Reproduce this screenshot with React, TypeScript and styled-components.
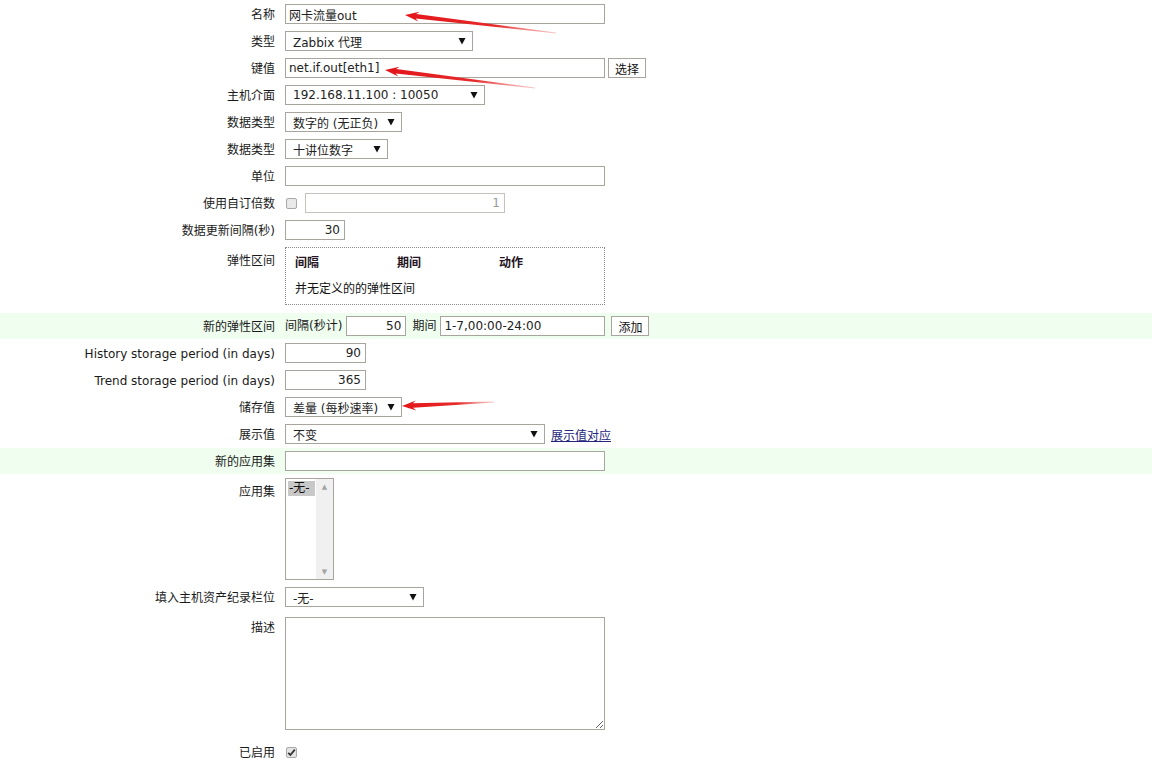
import React from "react";
import styled, { createGlobalStyle } from "styled-components";

const GlobalStyle = createGlobalStyle`
  body {
    margin: 0;
    background: #ffffff;
    font-family: "DejaVu Sans", "Noto Sans CJK SC", sans-serif;
    font-size: 12px;
    color: #111111;
  }
`;

type Arrow = { tx: number; ty: number; ex: number; ey: number };

const ARROWS: Arrow[] = [
  { tx: 405, ty: 15, ex: 556, ey: 33 },
  { tx: 385, ty: 70, ex: 535, ey: 88 },
  { tx: 402, ty: 406, ex: 494, ey: 402 },
];

const arrowPoints = ({ tx, ty, ex, ey }: Arrow) => {
  const dx = ex - tx;
  const dy = ey - ty;
  const len = Math.hypot(dx, dy);
  const ux = dx / len;
  const uy = dy / len;
  const px = -uy;
  const py = ux;
  const bx = tx + ux * 14;
  const by = ty + uy * 14;
  const nx = tx + ux * 11;
  const ny = ty + uy * 11;
  const pts = [
    [tx, ty],
    [bx + px * 5, by + py * 5],
    [nx + px * 2.2, ny + py * 2.2],
    [ex + px * 0.4, ey + py * 0.4],
    [ex - px * 0.4, ey - py * 0.4],
    [nx - px * 2.2, ny - py * 2.2],
    [bx - px * 5, by - py * 5],
  ];
  return pts.map((p) => `${p[0].toFixed(1)},${p[1].toFixed(1)}`).join(" ");
};

const ItemForm = () => {
  return (
    <SC.Page>
      <GlobalStyle />

      <SC.Row>
        <SC.Label>名称</SC.Label>
        <SC.Field>
          <SC.Input $width={320} defaultValue="网卡流量out" />
        </SC.Field>
      </SC.Row>

      <SC.Row>
        <SC.Label>类型</SC.Label>
        <SC.Field>
          <Select width={188} value="Zabbix 代理" />
        </SC.Field>
      </SC.Row>

      <SC.Row>
        <SC.Label>键值</SC.Label>
        <SC.Field $gap={3}>
          <SC.Input $width={320} defaultValue="net.if.out[eth1]" />
          <SC.Button>选择</SC.Button>
        </SC.Field>
      </SC.Row>

      <SC.Row>
        <SC.Label>主机介面</SC.Label>
        <SC.Field>
          <Select width={200} value="192.168.11.100 : 10050" />
        </SC.Field>
      </SC.Row>

      <SC.Row>
        <SC.Label>数据类型</SC.Label>
        <SC.Field>
          <Select width={117} value="数字的 (无正负)" />
        </SC.Field>
      </SC.Row>

      <SC.Row>
        <SC.Label>数据类型</SC.Label>
        <SC.Field>
          <Select width={103} value="十讲位数字" />
        </SC.Field>
      </SC.Row>

      <SC.Row>
        <SC.Label>单位</SC.Label>
        <SC.Field>
          <SC.Input $width={320} defaultValue="" />
        </SC.Field>
      </SC.Row>

      <SC.Row>
        <SC.Label>使用自订倍数</SC.Label>
        <SC.Field $gap={8}>
          <SC.Check />
          <SC.Input $width={200} $right $disabled readOnly defaultValue="1" />
        </SC.Field>
      </SC.Row>

      <SC.Row>
        <SC.Label>数据更新间隔(秒)</SC.Label>
        <SC.Field>
          <SC.Input $width={60} $right defaultValue="30" />
        </SC.Field>
      </SC.Row>

      <SC.Row>
        <SC.Label $offset={3}>弹性区间</SC.Label>
        <SC.Field $top>
          <SC.Interval.Box>
            <SC.Interval.Head>间隔</SC.Interval.Head>
            <SC.Interval.Head>期间</SC.Interval.Head>
            <SC.Interval.Head>动作</SC.Interval.Head>
            <SC.Interval.Empty>并无定义的的弹性区间</SC.Interval.Empty>
          </SC.Interval.Box>
        </SC.Field>
      </SC.Row>

      <SC.Row $green>
        <SC.Label>新的弹性区间</SC.Label>
        <SC.Field>
          <SC.Text>间隔(秒计)</SC.Text>
          <SC.Input $width={60} $right defaultValue="50" />
          <SC.Text $left={6}>期间</SC.Text>
          <SC.Input $width={165} defaultValue="1-7,00:00-24:00" />
          <SC.Button $left={6}>添加</SC.Button>
        </SC.Field>
      </SC.Row>

      <SC.Row>
        <SC.Label>History storage period (in days)</SC.Label>
        <SC.Field>
          <SC.Input $width={81} $right defaultValue="90" />
        </SC.Field>
      </SC.Row>

      <SC.Row>
        <SC.Label>Trend storage period (in days)</SC.Label>
        <SC.Field>
          <SC.Input $width={81} $right defaultValue="365" />
        </SC.Field>
      </SC.Row>

      <SC.Row>
        <SC.Label>储存值</SC.Label>
        <SC.Field>
          <Select width={117} value="差量 (每秒速率)" />
        </SC.Field>
      </SC.Row>

      <SC.Row>
        <SC.Label>展示值</SC.Label>
        <SC.Field $gap={6}>
          <Select width={260} value="不变" />
          <SC.Link href="#">展示值对应</SC.Link>
        </SC.Field>
      </SC.Row>

      <SC.Row $green>
        <SC.Label>新的应用集</SC.Label>
        <SC.Field>
          <SC.Input $width={320} defaultValue="" />
        </SC.Field>
      </SC.Row>

      <SC.Row>
        <SC.Label $offset={3}>应用集</SC.Label>
        <SC.Field $top>
          <SC.List.Box>
            <SC.List.Options>
              <SC.List.Option>-无-</SC.List.Option>
            </SC.List.Options>
            <SC.List.Track>
              <SC.List.Arrow>▲</SC.List.Arrow>
              <SC.List.Arrow>▼</SC.List.Arrow>
            </SC.List.Track>
          </SC.List.Box>
        </SC.Field>
      </SC.Row>

      <SC.Row>
        <SC.Label>填入主机资产纪录栏位</SC.Label>
        <SC.Field>
          <Select width={139} value="-无-" />
        </SC.Field>
      </SC.Row>

      <SC.Row>
        <SC.Label $offset={3}>描述</SC.Label>
        <SC.Field $top>
          <SC.TextArea defaultValue="" />
        </SC.Field>
      </SC.Row>

      <SC.Row>
        <SC.Label>已启用</SC.Label>
        <SC.Field>
          <SC.Check $checked>
            <svg width="9" height="9" viewBox="0 0 9 9">
              <path
                d="M1.2 4.8 L3.4 7 L7.8 1.6"
                fill="none"
                stroke="#333"
                strokeWidth="1.8"
              />
            </svg>
          </SC.Check>
        </SC.Field>
      </SC.Row>

      <SC.Overlay width="1152" height="763" viewBox="0 0 1152 763">
        <defs>
          {ARROWS.map((a, i) => (
            <linearGradient
              key={i}
              id={`arrow-${i}`}
              gradientUnits="userSpaceOnUse"
              x1={a.tx}
              y1={a.ty}
              x2={a.ex}
              y2={a.ey}
            >
              <stop offset="0" stopColor="#e3151a" />
              <stop offset="0.6" stopColor="#e62a2a" />
              <stop offset="1" stopColor="#f07a7a" stopOpacity="0.4" />
            </linearGradient>
          ))}
        </defs>
        {ARROWS.map((a, i) => (
          <polygon key={i} points={arrowPoints(a)} fill={`url(#arrow-${i})`} />
        ))}
      </SC.Overlay>
    </SC.Page>
  );
};

const Select = ({ width, value }: { width: number; value: string }) => (
  <SC.Select $width={width}>
    <span>{value}</span>
    <svg width="8" height="8" viewBox="0 0 8 8">
      <path d="M0.5 1 L7.5 1 L4 7.5 Z" fill="#111" />
    </svg>
  </SC.Select>
);

const SC = {
  Page: styled.div`
    position: relative;
    display: flex;
    flex-direction: column;
    gap: 1px;
    width: 1152px;
    padding-top: 1px;
  `,
  Row: styled.div<{ $green?: boolean }>`
    display: grid;
    grid-template-columns: 285px 1fr;
    align-items: start;
    padding: 3px 0;
    background: ${({ $green }) => ($green ? "#effeef" : "transparent")};
  `,
  Label: styled.div<{ $offset?: number }>`
    box-sizing: border-box;
    padding-right: 10px;
    padding-top: ${({ $offset }) => ($offset || 0) + 1}px;
    margin-bottom: -1px;
    text-align: right;
    line-height: 20px;
    font-size: 12px;
    color: #1a1a1a;
    white-space: nowrap;
  `,
  Field: styled.div<{ $gap?: number; $top?: boolean }>`
    display: flex;
    flex-direction: row;
    align-items: ${({ $top }) => ($top ? "flex-start" : "center")};
    gap: ${({ $gap }) => $gap || 0}px;
    min-height: 20px;
  `,
  Text: styled.span<{ $left?: number }>`
    margin-left: ${({ $left }) => $left || 0}px;
    margin-right: 4px;
    line-height: 20px;
    color: #1a1a1a;
  `,
  Input: styled.input<{ $width: number; $right?: boolean; $disabled?: boolean }>`
    box-sizing: border-box;
    width: ${({ $width }) => $width}px;
    height: 20px;
    margin: 0;
    padding: 0 4px 0 3px;
    border: 1px solid ${({ $disabled }) => ($disabled ? "#c4c2bc" : "#a7a59d")};
    border-radius: 0;
    outline: none;
    background: #ffffff;
    font-family: "DejaVu Sans", "Noto Sans CJK SC", sans-serif;
    font-size: 12px;
    color: ${({ $disabled }) => ($disabled ? "#9a9a9a" : "#222222")};
    text-align: ${({ $right }) => ($right ? "right" : "left")};
  `,
  Select: styled.div<{ $width: number }>`
    box-sizing: border-box;
    display: flex;
    align-items: center;
    justify-content: space-between;
    width: ${({ $width }) => $width}px;
    height: 20px;
    padding: 0 6px 0 7px;
    border: 1px solid #a7a59d;
    background: #ffffff;
    font-size: 12px;
    color: #222222;
    white-space: nowrap;
    overflow: hidden;
  `,
  Button: styled.button<{ $left?: number }>`
    box-sizing: border-box;
    height: 20px;
    margin: 0 0 0 ${({ $left }) => $left || 0}px;
    padding: 0 6px;
    border: 1px solid #a7a59d;
    border-radius: 0;
    background: #ffffff;
    font-family: "DejaVu Sans", "Noto Sans CJK SC", sans-serif;
    font-size: 12px;
    color: #111111;
  `,
  Check: styled.span<{ $checked?: boolean }>`
    box-sizing: border-box;
    display: flex;
    align-items: center;
    justify-content: center;
    width: 11px;
    height: 11px;
    margin-left: 1px;
    border: 1px solid #a9a9a9;
    border-radius: 2px;
    background: ${({ $checked }) => ($checked ? "#e4e4e4" : "#e9e9e9")};
  `,
  Link: styled.a`
    color: #25257d;
    text-decoration: underline;
    font-size: 12px;
  `,
  Interval: {
    Box: styled.div`
      box-sizing: border-box;
      display: grid;
      grid-template-columns: 102px 102px 1fr;
      grid-auto-rows: 20px;
      row-gap: 6px;
      align-items: center;
      width: 320px;
      height: 58px;
      margin-bottom: 4px;
      padding: 3px 9px 0;
      border: 1px dotted #8a8a8a;
    `,
    Head: styled.div`
      font-weight: bold;
      color: #231323;
    `,
    Empty: styled.div`
      grid-column: 1 / -1;
      color: #111111;
    `,
  },
  List: {
    Box: styled.div`
      box-sizing: border-box;
      display: flex;
      flex-direction: row;
      width: 49px;
      height: 102px;
      border: 1px solid #a7a59d;
      background: #ffffff;
    `,
    Options: styled.div`
      flex: 1;
      padding: 2px 0 0 2px;
    `,
    Option: styled.div`
      width: 26px;
      height: 15px;
      line-height: 15px;
      padding-left: 1px;
      background: #c8c8c8;
      font-size: 12px;
      color: #111111;
    `,
    Track: styled.div`
      display: flex;
      flex-direction: column;
      justify-content: space-between;
      align-items: center;
      width: 17px;
      padding: 4px 0 3px;
      background: #f0f0f0;
    `,
    Arrow: styled.span`
      font-size: 7px;
      line-height: 8px;
      color: #a3a3a3;
    `,
  },
  TextArea: styled.textarea`
    box-sizing: border-box;
    width: 320px;
    height: 113px;
    margin: 3px 0 5px;
    padding: 2px 3px;
    border: 1px solid #a7a59d;
    border-radius: 0;
    outline: none;
    font-family: "DejaVu Sans", "Noto Sans CJK SC", sans-serif;
    font-size: 12px;
  `,
  Overlay: styled.svg`
    position: absolute;
    top: 0;
    left: 0;
    pointer-events: none;
  `,
};

export default ItemForm;
